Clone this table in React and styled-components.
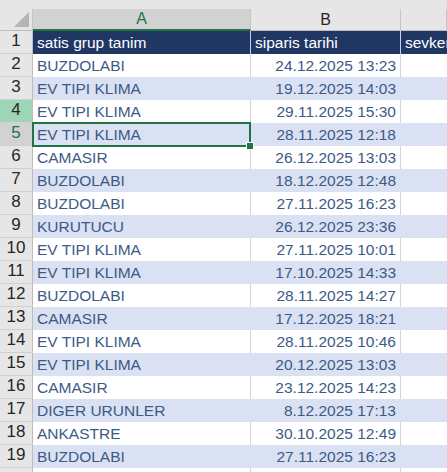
import React from "react";
import styled, { createGlobalStyle, css } from "styled-components";

const GlobalStyle = createGlobalStyle`
  html, body {
    margin: 0;
    padding: 0;
    background: #ffffff;
    overflow: hidden;
  }
  body {
    font-family: "Liberation Sans", Arial, sans-serif;
  }
`;

const rows = [
  ["BUZDOLABI", "24.12.2025 13:23"],
  ["EV TIPI KLIMA", "19.12.2025 14:03"],
  ["EV TIPI KLIMA", "29.11.2025 15:30"],
  ["EV TIPI KLIMA", "28.11.2025 12:18"],
  ["CAMASIR", "26.12.2025 13:03"],
  ["BUZDOLABI", "18.12.2025 12:48"],
  ["BUZDOLABI", "27.11.2025 16:23"],
  ["KURUTUCU", "26.12.2025 23:36"],
  ["EV TIPI KLIMA", "27.11.2025 10:01"],
  ["EV TIPI KLIMA", "17.10.2025 14:33"],
  ["BUZDOLABI", "28.11.2025 14:27"],
  ["CAMASIR", "17.12.2025 18:21"],
  ["EV TIPI KLIMA", "28.11.2025 10:46"],
  ["EV TIPI KLIMA", "20.12.2025 13:03"],
  ["CAMASIR", "23.12.2025 14:23"],
  ["DIGER URUNLER", "8.12.2025 17:13"],
  ["ANKASTRE", "30.10.2025 12:49"],
  ["BUZDOLABI", "27.11.2025 16:23"],
];

const GREEN = "#217346";
const COLS = "33px 218px 150px 1fr";

const Sheet = styled.div`
  width: 447px;
  height: 472px;
  overflow: hidden;
  background: #e6e6e6;
  padding-top: 9px;
  box-sizing: border-box;
`;

const HeaderRow = styled.div`
  display: grid;
  grid-template-columns: ${COLS};
  height: 22px;
`;

const Corner = styled.div`
  position: relative;
  background: #e6e6e6;
  border-right: 1px solid #c6c6c6;
  border-bottom: 1px solid #bdbdbd;
  box-sizing: border-box;

  &::after {
    content: "";
    position: absolute;
    right: 3px;
    bottom: 3px;
    width: 0;
    height: 0;
    border-left: 15px solid transparent;
    border-bottom: 15px solid #b4b4b4;
  }
`;

const ColHead = styled.div`
  display: flex;
  align-items: center;
  justify-content: center;
  box-sizing: border-box;
  font-size: 16px;
  color: #262626;
  background: #e6e6e6;
  border-right: 1px solid #c6c6c6;
  border-bottom: 1px solid #bdbdbd;

  ${(p) =>
    p.$active &&
    css`
      background: #d2d2d2;
      color: ${GREEN};
      border-bottom: 2px solid ${GREEN};
    `}
`;

const Row = styled.div`
  display: grid;
  grid-template-columns: ${COLS};
  height: 23px;
`;

const RowHead = styled.div`
  display: flex;
  align-items: flex-end;
  justify-content: center;
  padding-bottom: 2px;
  box-sizing: border-box;
  font-size: 17px;
  color: #262626;
  background: ${(p) => (p.$hover ? "#9fd5b7" : p.$active ? "#d2d2d2" : "#e6e6e6")};
  ${(p) => p.$active && `color: ${GREEN};`}
  border-right: 1px solid #bdbdbd;
  border-bottom: 1px solid #d0d0d0;
`;

const Cell = styled.div`
  position: relative;
  display: flex;
  align-items: flex-end;
  justify-content: ${(p) => (p.$right ? "flex-end" : "flex-start")};
  padding: 0 4px 2px 4px;
  box-sizing: border-box;
  font-size: 15.5px;
  white-space: nowrap;
  overflow: hidden;
  color: ${(p) => (p.$head ? "#ffffff" : "#3d5a86")};
  background: ${(p) => (p.$head ? "#203764" : p.$band ? "#d9e1f2" : "#ffffff")};
  border-right: 1px solid
    ${(p) => (p.$head ? "#c9d1de" : p.$band ? "#d9e1f2" : "#d4d4d4")};
  ${(p) => p.$last && "border-right: none;"}
`;

const Selected = styled.div`
  position: absolute;
  left: -1px;
  top: -1px;
  right: -1px;
  bottom: -1px;
  border: 2px solid ${GREEN};
  pointer-events: none;

  &::after {
    content: "";
    position: absolute;
    right: -5px;
    bottom: -5px;
    width: 6px;
    height: 6px;
    background: ${GREEN};
    border: 1px solid #ffffff;
  }
`;

const SelectedCell = styled(Cell)`
  overflow: visible;
  z-index: 2;
`;

export default function App() {
  return (
    <>
      <GlobalStyle />
      <Sheet>
        <HeaderRow>
          <Corner />
          <ColHead $active>A</ColHead>
          <ColHead>B</ColHead>
          <ColHead />
        </HeaderRow>

        <Row>
          <RowHead>1</RowHead>
          <Cell $head>satis grup tanim</Cell>
          <Cell $head>siparis tarihi</Cell>
          <Cell $head $last>sevken</Cell>
        </Row>

        {rows.map(([group, date], i) => {
          const n = i + 2;
          const band = n % 2 === 1;
          const selected = n === 5;
          const A = selected ? SelectedCell : Cell;
          return (
            <Row key={n}>
              <RowHead $hover={n === 4} $active={selected}>
                {n}
              </RowHead>
              <A $band={band}>
                {group}
                {selected && <Selected />}
              </A>
              <Cell $band={band} $right>
                {date}
              </Cell>
              <Cell $band={band} $last />
            </Row>
          );
        })}

        <Row>
          <RowHead />
          <Cell />
          <Cell />
          <Cell $last />
        </Row>
      </Sheet>
    </>
  );
}
